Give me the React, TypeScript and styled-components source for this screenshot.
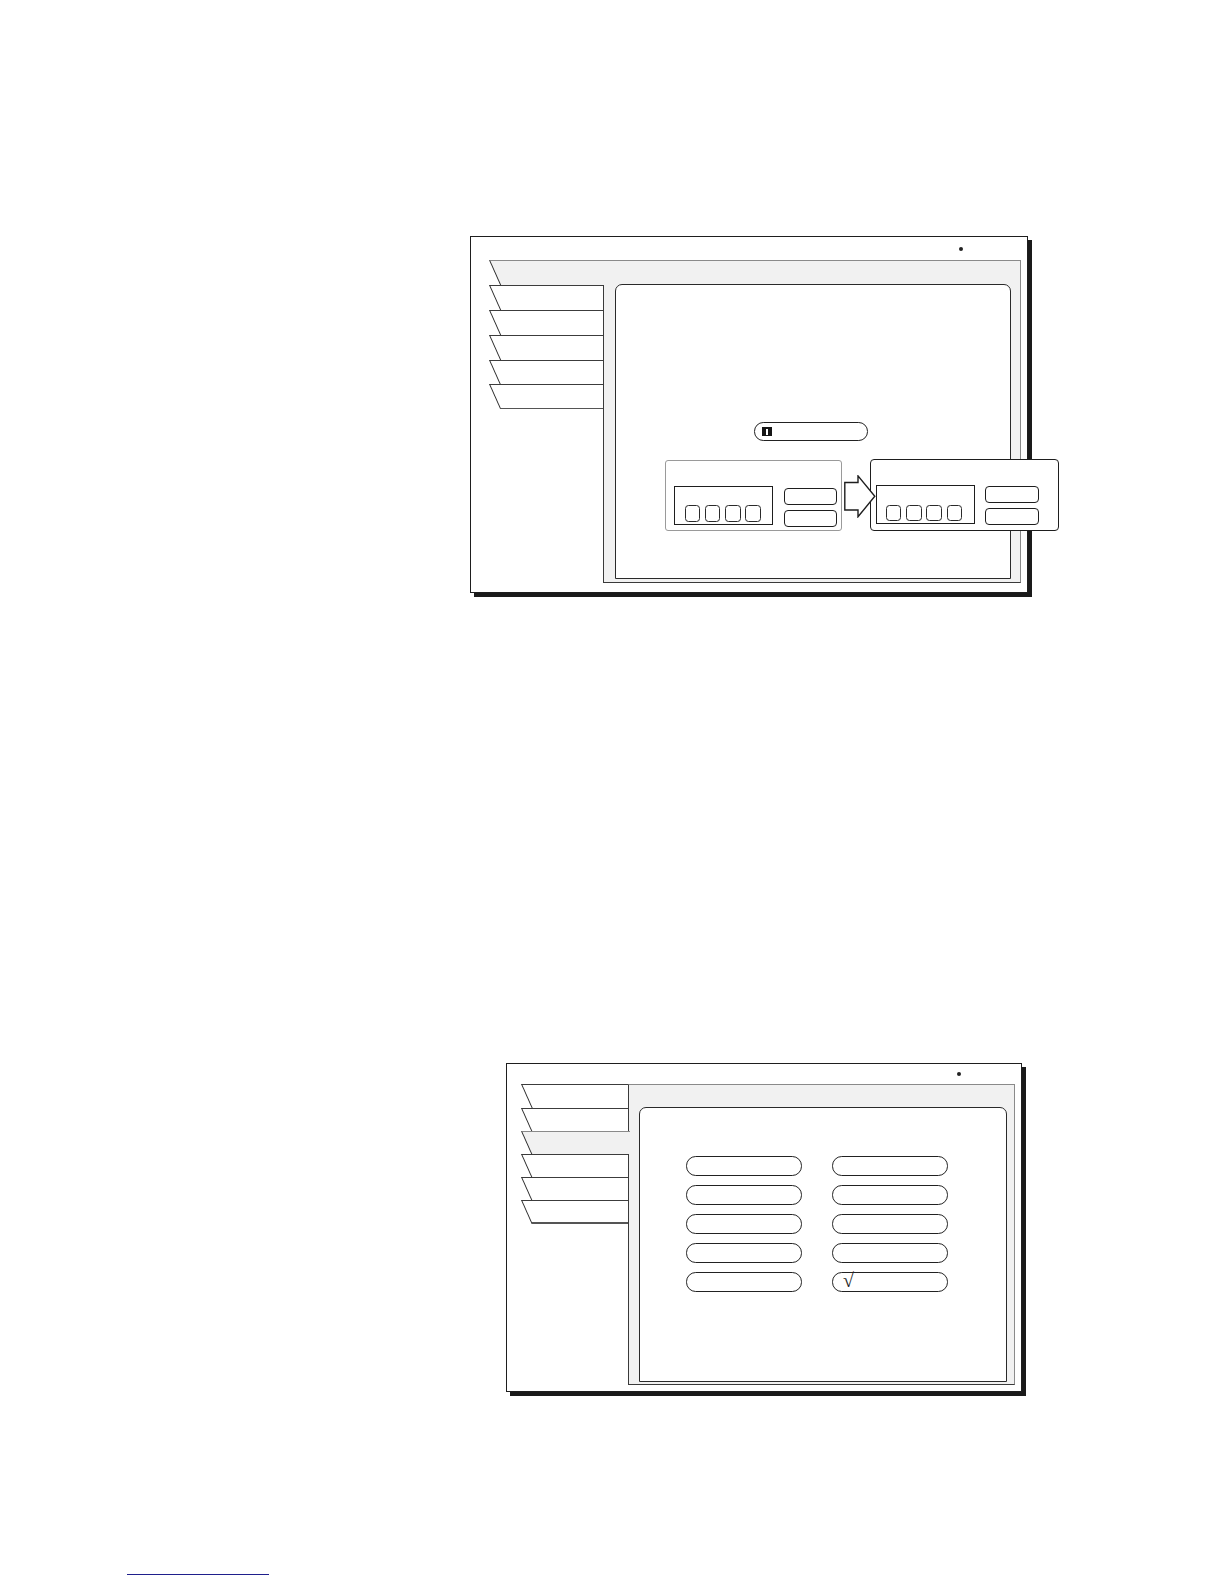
import React from 'react';
import styled, { createGlobalStyle } from 'styled-components';

const GlobalStyle = createGlobalStyle`
  html, body {
    margin: 0;
    padding: 0;
    background: #fff;
  }
  body {
    font-family: "Liberation Sans", Arial, sans-serif;
  }
  * {
    box-sizing: border-box;
  }
`;

const Page = styled.div`
  width: 1224px;
  min-height: 1584px;
  display: flex;
  flex-direction: column;
  align-items: flex-start;
`;

const Screen = styled.div<{ $w: number; $h: number; $mt: number; $ml: number; $pl: number }>`
  width: ${p => p.$w}px;
  height: ${p => p.$h}px;
  margin: ${p => p.$mt}px 0 0 ${p => p.$ml}px;
  padding-left: ${p => p.$pl}px;
  border: 1.5px solid #1e1e1e;
  box-shadow: 4px 4px 0 #1a1a1a;
  background: #fff;
  display: flex;
  flex-direction: column;
  flex-shrink: 0;
`;

const Header = styled.div<{ $h: number; $dot: number }>`
  height: ${p => p.$h}px;
  flex-shrink: 0;
  display: flex;
  align-items: center;
  padding-left: ${p => p.$dot}px;
`;

const Dot = styled.span`
  width: 4px;
  height: 4px;
  border-radius: 50%;
  background: #222;
`;

const Workspace = styled.div<{ $w: number; $h: number }>`
  width: ${p => p.$w}px;
  height: ${p => p.$h}px;
  display: flex;
  flex-shrink: 0;
`;

const TabColumn = styled.div<{ $w: number }>`
  width: ${p => p.$w}px;
  flex-shrink: 0;
  display: flex;
  flex-direction: column;
`;

const Tab = styled.div<{ $h: number; $active?: boolean; $last?: boolean }>`
  position: relative;
  z-index: ${p => (p.$active ? 2 : 1)};
  height: ${p => p.$h}px;
  width: ${p => (p.$active ? 'calc(100% + 2px)' : '100%')};
  flex-shrink: 0;
  overflow: hidden;

  &::before {
    content: '';
    position: absolute;
    top: 0;
    left: 0;
    width: calc(100% + 40px);
    height: 100%;
    border-top: 1.3px solid ${p => (p.$active ? '#8a8a8a' : '#3c3c3c')};
    border-left: 1.3px solid #2a2a2a;
    background: ${p => (p.$active ? '#f1f1f1' : '#fff')};
    transform-origin: 0 0;
    transform: skewX(24deg);
  }

  &::after {
    content: '';
    display: ${p => (p.$last ? 'block' : 'none')};
    position: absolute;
    left: ${p => p.$h * 0.445}px;
    right: 0;
    bottom: 0;
    height: 1.4px;
    background: #555;
  }
`;

const Panel = styled.div<{ $pad: string }>`
  flex: 1;
  min-width: 0;
  display: flex;
  padding: ${p => p.$pad};
  background: #f1f1f1;
  border: 1.5px solid #3a3a3a;
  border-top-color: #8a8a8a;
  border-right-color: #8a8a8a;
`;

const Sheet = styled.div`
  flex: 1;
  min-width: 0;
  display: flex;
  flex-direction: column;
  align-items: flex-start;
  background: #fff;
  border: 1.5px solid #2a2a2a;
  border-radius: 7px 7px 0 0;
`;

const Pill = styled.div<{ $w: number; $h: number; $mt?: number; $ml?: number }>`
  width: ${p => p.$w}px;
  height: ${p => p.$h}px;
  margin: ${p => p.$mt ?? 0}px 0 0 ${p => p.$ml ?? 0}px;
  border: 1.3px solid #222;
  border-radius: ${p => p.$h / 2}px;
  background: #fff;
  display: flex;
  align-items: flex-start;
  flex-shrink: 0;
`;

const Cursor = styled.span`
  position: relative;
  width: 10px;
  height: 9px;
  margin: 3.7px 0 0 6.7px;
  background: #161616;

  &::after {
    content: '';
    position: absolute;
    left: 4px;
    top: 1.5px;
    width: 2px;
    height: 6px;
    background: #fff;
  }
`;

const Check = styled.span`
  margin: -3px 0 0 9.5px;
  font-family: "Liberation Serif", "DejaVu Serif", serif;
  font-size: 20px;
  line-height: 20px;
  color: #222;
`;

const DeviceRow = styled.div`
  display: flex;
  align-items: flex-start;
  flex-shrink: 0;
  margin: 18.5px 0 0 49.4px;
`;

const DeviceBox = styled.div<{ $w: number; $h: number; $mt: number; $pl: number; $pt: number; $dark?: boolean }>`
  width: ${p => p.$w}px;
  height: ${p => p.$h}px;
  margin-top: ${p => p.$mt}px;
  padding: ${p => p.$pt}px 0 0 ${p => p.$pl}px;
  flex-shrink: 0;
  display: flex;
  align-items: flex-start;
  background: #fff;
  border: 1.4px solid ${p => (p.$dark ? '#1e1e1e' : '#9a9a9a')};
  border-radius: ${p => (p.$dark ? 4 : 3)}px;
`;

const Display = styled.div<{ $pl: number; $pb: number; $h: number }>`
  width: 99px;
  height: ${p => p.$h}px;
  flex-shrink: 0;
  display: flex;
  align-items: flex-end;
  gap: 4.7px;
  padding: 0 0 ${p => p.$pb}px ${p => p.$pl}px;
  border: 1.4px solid #1e1e1e;
`;

const Digit = styled.span<{ $h: number }>`
  width: 15.6px;
  height: ${p => p.$h}px;
  border: 1.2px solid #2a2a2a;
  border-radius: 3.5px;
`;

const ButtonStack = styled.div<{ $mt: number; $gap: number }>`
  display: flex;
  flex-direction: column;
  gap: ${p => p.$gap}px;
  margin: ${p => p.$mt}px 0 0 10.5px;
`;

const KeyButton = styled.span<{ $w: number }>`
  width: ${p => p.$w}px;
  height: 17px;
  border: 1.2px solid #1e1e1e;
  border-radius: 4px;
`;

const ArrowWrap = styled.div`
  position: relative;
  z-index: 2;
  width: 32px;
  height: 43px;
  margin: 16px -6px 0 2.5px;
  flex-shrink: 0;
`;

const OptionGrid = styled.div`
  display: grid;
  grid-template-columns: 115.6px 115.6px;
  column-gap: 30.7px;
  row-gap: 9.6px;
  margin: 48.5px 0 0 46.5px;
`;

const LinkRule = styled.div`
  width: 142px;
  margin: 182px 0 0 127px;
  border-top: 1.6px solid #1f1f8c;
`;

type TabsProps = { count: number; active: number; h: number };

function Tabs({ count, active, h }: TabsProps) {
  return (
    <>
      {Array.from({ length: count }, (_, i) => (
        <Tab key={i} $h={h} $active={i === active} $last={i === count - 1} />
      ))}
    </>
  );
}

function Arrow() {
  return (
    <ArrowWrap>
      <svg width="32" height="43" viewBox="0 0 32 43">
        <path
          d="M0.8 7.5 H14 V0.9 L30.8 21.3 L14 41.8 V35 H0.8 Z"
          fill="#fff"
          stroke="#1e1e1e"
          strokeWidth="1.4"
        />
      </svg>
    </ArrowWrap>
  );
}

type DeviceProps = {
  w: number;
  h: number;
  mt: number;
  pl: number;
  pt: number;
  dark?: boolean;
  displayH: number;
  digitPl: number;
  digitPb: number;
  digitH: number;
  btnW: number;
  btnMt: number;
  btnGap: number;
};

function Device(p: DeviceProps) {
  return (
    <DeviceBox $w={p.w} $h={p.h} $mt={p.mt} $pl={p.pl} $pt={p.pt} $dark={p.dark}>
      <Display $pl={p.digitPl} $pb={p.digitPb} $h={p.displayH}>
        {[0, 1, 2, 3].map(i => (
          <Digit key={i} $h={p.digitH} />
        ))}
      </Display>
      <ButtonStack $mt={p.btnMt} $gap={p.btnGap}>
        <KeyButton $w={p.btnW} />
        <KeyButton $w={p.btnW} />
      </ButtonStack>
    </DeviceBox>
  );
}

export default function App() {
  return (
    <>
      <GlobalStyle />
      <Page>
        <Screen $w={557.5} $h={356.2} $mt={236.4} $ml={470} $pl={17.5}>
          <Header $h={22.6} $dot={470.6}>
            <Dot />
          </Header>
          <Workspace $w={532.6} $h={323.5}>
            <TabColumn $w={114}>
              <Tabs count={6} active={0} h={24.9} />
            </TabColumn>
            <Panel $pad="23px 8.7px 3.5px 11px">
              <Sheet>
                <Pill $w={114.5} $h={18.5} $mt={137.5} $ml={138.4}>
                  <Cursor />
                </Pill>
                <DeviceRow>
                  <Device
                    w={177}
                    h={70.3}
                    mt={1}
                    pl={8.3}
                    pt={24.2}
                    displayH={39.3}
                    digitPl={9.4}
                    digitPb={2}
                    digitH={16.5}
                    btnW={53}
                    btnMt={2.3}
                    btnGap={5}
                  />
                  <Arrow />
                  <Device
                    w={189}
                    h={71.5}
                    mt={0}
                    pl={4.2}
                    pt={24.5}
                    dark
                    displayH={39.5}
                    digitPl={9.1}
                    digitPb={2}
                    digitH={16}
                    btnW={54}
                    btnMt={1.3}
                    btnGap={4.7}
                  />
                </DeviceRow>
              </Sheet>
            </Panel>
          </Workspace>
        </Screen>

        <Screen $w={516.7} $h={328.7} $mt={470.7} $ml={505.8} $pl={14.7}>
          <Header $h={20.2} $dot={435.8}>
            <Dot />
          </Header>
          <Workspace $w={493.6} $h={301}>
            <TabColumn $w={106.5}>
              <Tabs count={6} active={2} h={23.2} />
            </TabColumn>
            <Panel $pad="21.5px 6.9px 2.5px 9.7px">
              <Sheet>
                <OptionGrid>
                  {Array.from({ length: 10 }, (_, i) => (
                    <Pill key={i} $w={115.6} $h={19.4}>
                      {i === 9 && <Check>√</Check>}
                    </Pill>
                  ))}
                </OptionGrid>
              </Sheet>
            </Panel>
          </Workspace>
        </Screen>

        <LinkRule />
      </Page>
    </>
  );
}
